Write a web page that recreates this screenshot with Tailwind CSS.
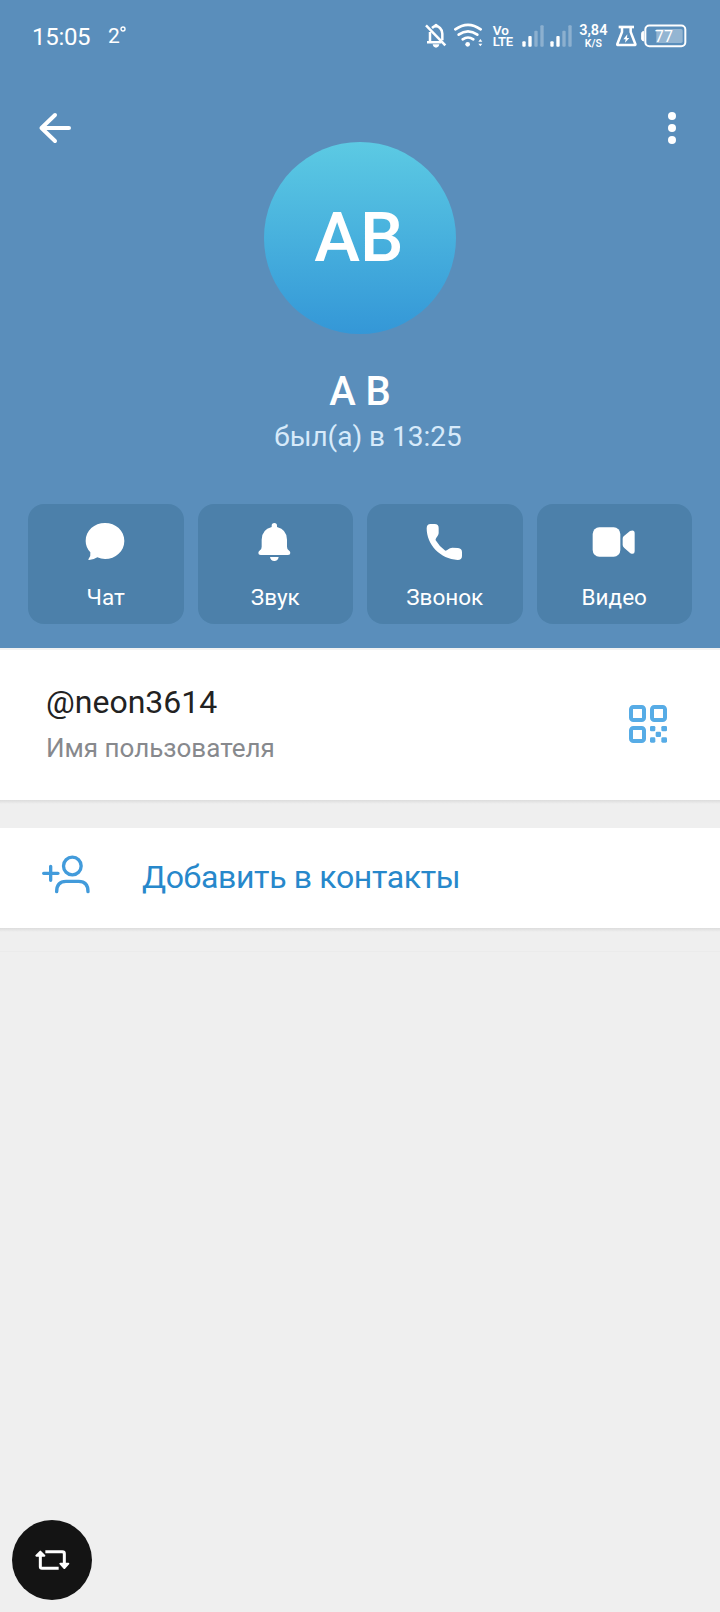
<!DOCTYPE html>
<html lang="ru">
<head>
<meta charset="utf-8">
<title>A B</title>
<script src="https://cdn.jsdelivr.net/npm/@tailwindcss/browser@4"></script>
</head>
<body class="bg-[#efefef]">
<div class="flex h-[1612px] w-[720px] flex-col overflow-hidden bg-[#efefef] font-['Roboto',sans-serif]">

  <header class="flex h-[648px] shrink-0 flex-col bg-[#5a8ebb] text-white">
    <!-- Status bar -->
    <div class="flex h-[72px] shrink-0 items-center pl-[32px]">
      <span class="w-[76px] pt-px text-[24px] leading-[28px] tracking-[-0.3px]">15:05</span>
      <span class="text-[21px] leading-[28px]">2</span>
      <svg class="mb-[14px] h-[6px] w-[6px]" viewBox="0 0 6 6" fill="none" stroke="#fff" stroke-width="1.4"><circle cx="3" cy="3" r="2"/></svg>
      <svg class="ml-[299px] h-[26px] w-[22px] shrink-0" viewBox="48 39 66 78" fill="none" stroke="#fff" stroke-width="7.5">
        <path d="M51 46L109 106"/>
        <path d="M63 66V97H57M54 97H97"/>
        <path d="M69 54Q81 43 93 54Q100 61 100 71V91"/>
        <path d="M75 48Q76 41 81 41Q86 41 87 48" fill="#fff" stroke="none"/>
        <path d="M71 103H91Q89 113 81 113Q73 113 71 103Z" fill="#fff" stroke="none"/>
      </svg>
      <svg class="ml-[7px] h-[26px] w-[30px] shrink-0" viewBox="135 39 90 78" fill="none" stroke="#fff" stroke-width="8" stroke-linecap="round">
        <path d="M139 58Q177 31 215 58"/>
        <path d="M149 74Q177 54 205 74"/>
        <path d="M161 88Q177 77 193 88"/>
        <circle cx="176" cy="103" r="7" fill="#fff" stroke="none"/>
        <path d="M208 95L214 87L220 95ZM208 101L214 109L220 101Z" fill="#fff" stroke="none"/>
      </svg>
      <div class="ml-[9px] w-[21px] shrink-0 text-[13px] leading-[12px] font-semibold tracking-[-0.3px]"><div class="text-[13.5px] tracking-normal">Vo</div><div>LTE</div></div>
      <svg class="ml-[8px] h-[26px] w-[22px] shrink-0" viewBox="338 39 66 78" fill="#fff">
        <rect x="339" y="94" width="10" height="16" rx="3"/><rect x="357" y="78" width="10" height="32" rx="3"/>
        <g opacity=".3"><rect x="375" y="62" width="10" height="48" rx="3"/><rect x="393" y="46" width="10" height="64" rx="3"/></g>
      </svg>
      <svg class="ml-[6.5px] h-[26px] w-[22px] shrink-0" viewBox="4 39 66 78" fill="#fff">
        <rect x="5" y="94" width="10" height="16" rx="3"/><rect x="23" y="78" width="10" height="32" rx="3"/>
        <g opacity=".3"><rect x="41" y="62" width="10" height="48" rx="3"/><rect x="59" y="46" width="10" height="64" rx="3"/></g>
      </svg>
      <div class="ml-[6px] w-[30px] shrink-0 pt-[2px] text-center font-semibold"><div class="text-[14.5px] leading-[12px]">3,84</div><div class="text-[10.5px] leading-[13px]">K/S</div></div>
      <svg class="ml-[7.5px] h-[26px] w-[21px] shrink-0" viewBox="202 39 63 78" fill="none" stroke="#fff" stroke-width="7.5" stroke-linejoin="round">
        <path d="M210 51H256" stroke-width="8"/>
        <path d="M220 52V66L206 102Q205 105 209 105H257Q261 105 260 102L246 66V52"/>
        <path d="M236 73L224 88H231L229 98L242 84H235Z" fill="#fff" stroke="none"/>
      </svg>
      <svg class="ml-[4px] h-[26px] w-[46px] shrink-0" viewBox="276 39 138 78">
        <path d="M284 64Q278 65 278 70V87Q278 92 284 93Z" fill="#fff" stroke="#fff" stroke-width="3"/>
        <rect x="289" y="46.500" width="120" height="62" rx="12" fill="none" stroke="#fff" stroke-width="6"/>
        <path d="M322 57H396Q401 57 401 62V94Q401 99 396 99H322Z" fill="#fff" opacity=".35"/>
        <text x="317" y="96" font-family="Roboto, sans-serif" font-size="48" fill="#fff" textLength="55">77</text>
      </svg>
    </div>

    <!-- Toolbar -->
    <div class="flex h-[112px] shrink-0 items-center justify-between pr-[44px] pl-[38px]">
      <svg class="h-[32px] w-[34px]" viewBox="0 0 34 32" fill="none" stroke="#fff" stroke-width="4" stroke-linecap="round" stroke-linejoin="round"><path d="M31 16H3.500M17 3L3.500 16L17 29"/></svg>
      <svg class="h-[32px] w-[8px]" viewBox="0 0 8 32" fill="#fff"><circle cx="4" cy="4" r="4"/><circle cx="4" cy="16" r="4"/><circle cx="4" cy="28" r="4"/></svg>
    </div>

    <!-- Avatar and name -->
    <div class="-mt-[42px] flex size-[192px] shrink-0 items-center justify-center self-center rounded-full bg-linear-to-b from-[#5ccae3] to-[#3497d7] pr-[2px] text-[69px] leading-[80px] font-medium">AB</div>
    <h1 class="mt-[34px] text-center text-[40px] leading-[48px] font-medium">A B</h1>
    <p class="mt-[3px] pl-[16px] text-center text-[28px] leading-[36px] text-[#d7eafa]">был(а) в 13:25</p>

    <!-- Actions -->
    <div class="mt-[49px] grid h-[120px] grid-cols-4 gap-[14px] px-7 text-[22.500px] leading-[28px]">
      <div class="flex flex-col items-center rounded-2xl bg-[#4c80aa] pt-4">
        <svg class="size-[44px]" viewBox="222 90 132 132" fill="#fff"><path d="M285 99C317 99 343 122 343 153S317 207 285 207Q273 207 262 202Q250 210 237 210Q233 210 236 206Q243 198 241 187Q227 172 227 153C227 122 253 99 285 99Z"/></svg>
        <span class="mt-[19px]">Чат</span>
      </div>
      <div class="flex flex-col items-center rounded-2xl bg-[#4c80aa] pt-4">
        <svg class="size-[44px]" viewBox="731 90 132 132" fill="#fff"><path d="M787 111V107A8 8 0 0 1 803 107V111Q833 119 833 149V170Q833 177 838 181Q843 184 843 189Q843 195 836 195H754Q747 195 747 189Q747 184 752 181Q757 177 757 170V149Q757 119 787 111ZM782 201H808Q806 213 795 213T782 201Z"/></svg>
        <span class="mt-[19px]">Звук</span>
      </div>
      <div class="flex flex-col items-center rounded-2xl bg-[#4c80aa] pt-4">
        <svg class="size-[44px]" viewBox="188 90 132 132" fill="#fff"><path d="M199 115Q199 102 211 102H223Q235 102 235 114V128C235 138 224 144 226 151Q237 170 255 182C262 182 265 173 276 173L293 174Q305 175 305 187V198Q305 210 292 210C240 207 199 165 199 115Z"/></svg>
        <span class="mt-[19px]">Звонок</span>
      </div>
      <div class="flex flex-col items-center rounded-2xl bg-[#4c80aa] pt-4">
        <svg class="size-[44px]" viewBox="697 90 132 132" fill="#fff"><rect x="699" y="112" width="83" height="88" rx="20"/><path d="M789 146Q789 142 792 139L811 123Q825 118 825 130V184Q825 195 812 190L794 174Q789 170 789 165Z"/></svg>
        <span class="mt-[19px]">Видео</span>
      </div>
    </div>
  </header>

  <!-- Username -->
  <section class="flex h-[152px] shrink-0 items-center justify-between border-t-2 border-[#f2f2f2] bg-white pr-[51px] pl-[46px]">
    <div class="pb-[2px]">
      <div class="text-[32px] leading-[40px] text-[#222]">@neon3614</div>
      <div class="mt-[8px] text-[26px] leading-[36px] text-[#87898d]">Имя пользователя</div>
    </div>
    <svg class="mb-[2px] size-[42px]" viewBox="81 69 126 126" fill="none" stroke="#57ace6" stroke-width="12">
      <rect x="93" y="81" width="39" height="39" rx="7"/><rect x="156" y="81" width="39" height="39" rx="7"/><rect x="93" y="144" width="39" height="39" rx="7"/>
      <g fill="#57ace6" stroke="none"><rect x="150" y="138" width="16" height="16" rx="4"/><rect x="184" y="138" width="17" height="16" rx="4"/><rect x="167" y="155" width="16" height="16" rx="4"/><rect x="150" y="172" width="16" height="16" rx="4"/><rect x="184" y="172" width="17" height="16" rx="4"/></g>
    </svg>
  </section>
  <div class="h-[28px] shrink-0 bg-[#efefef]"><div class="h-[4px] bg-linear-to-b from-[#dcdcdc] to-[#efefef]"></div></div>

  <!-- Add to contacts -->
  <section class="flex h-[100px] shrink-0 items-center bg-white pl-[42px]">
    <svg class="mt-[-8px] h-[40px] w-[50px]" viewBox="126 582 150 120" fill="none" stroke="#429bdb" stroke-width="10" stroke-linecap="round">
      <path d="M131 640H174M152 619V661"/><circle cx="217" cy="618" r="26.500"/><path d="M170 695Q170 664 198 664H236Q264 664 264 695"/>
    </svg>
    <span class="ml-[50px] pb-[3px] text-[32px] leading-[40px] tracking-[-0.35px] text-[#2788cb]">Добавить в контакты</span>
  </section>
  <div class="h-[24px] shrink-0 border-b border-[#ebebeb]"><div class="h-[4px] bg-linear-to-b from-[#dcdcdc] to-[#efefef]"></div></div>

  <!-- Floating rotate button -->
  <button class="mt-auto mb-[12px] ml-[12px] flex size-[80px] shrink-0 items-center justify-center rounded-full bg-[#141414]">
    <svg class="h-[24px] w-[36px]" viewBox="102 114 108 72" fill="none" stroke="#fff" stroke-width="9">
      <path d="M136 125.500H187Q193 125.500 193 131V160M121 138V170Q121 174.500 126 174.500H176" stroke-linejoin="round"/>
      <path d="M121 125L109 137H133ZM193 174L181 161H205Z" fill="#fff" stroke-width="6" stroke-linejoin="round"/>
    </svg>
  </button>
</div>
</body>
</html>
